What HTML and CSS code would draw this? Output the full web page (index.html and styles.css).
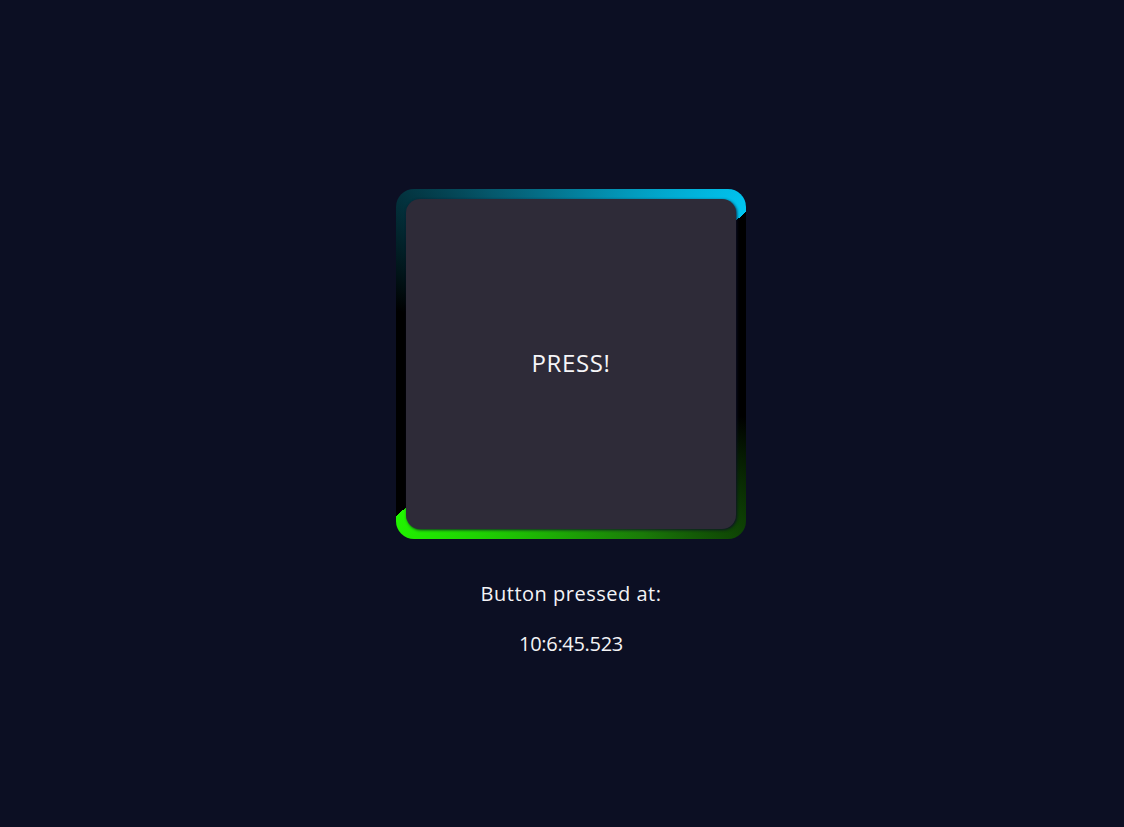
FILE: index.html
```html
<!DOCTYPE html>
<html lang="en">
<head>
<meta charset="utf-8">
<title>Press</title>
<link rel="stylesheet" href="styles.css">
</head>
<body>
<main class="page">
  <div class="frame">
    <button class="press-btn" type="button">PRESS!</button>
  </div>
  <p class="label">Button pressed at:</p>
  <p class="time">10:6:45.523</p>
</main>
</body>
</html>
```

FILE: styles.css
```css
html, body {
  margin: 0;
  padding: 0;
}

body {
  background: #0c0f23;
  min-height: 100vh;
  font-family: "Open Sans", "Liberation Sans", sans-serif;
  color: #f4f4f6;
}

.page {
  display: flex;
  flex-direction: column;
  align-items: center;
  padding-top: 189px;
  padding-left: 18px;
}

.frame {
  width: 350px;
  height: 350px;
  box-sizing: border-box;
  padding: 10px;
  border-radius: 18px;
  background: conic-gradient(from 49deg at 50% 50%,
    #000 0deg,
    #000 58deg,
    #1a7a08 108deg,
    #21f500 180deg,
    #000 180deg,
    #000 238deg,
    #05586c 286deg,
    #00c6f2 360deg);
}

.press-btn {
  width: 330px;
  height: 330px;
  border: none;
  border-radius: 14px;
  background: #2e2b38;
  box-shadow: 1px 1px 3px rgba(12, 14, 40, 0.9);
  color: #f6f6f8;
  font-family: "Open Sans", "Liberation Sans", sans-serif;
  font-size: 24px;
  letter-spacing: 0.6px;
  display: flex;
  align-items: center;
  justify-content: center;
  padding: 0 0 3px 0;
  cursor: pointer;
}

.label,
.time {
  margin: 0;
  font-size: 20px;
  line-height: 30px;
}

.label {
  margin-top: 40px;
  letter-spacing: 0.5px;
}

.time {
  margin-top: 20px;
  letter-spacing: -0.3px;
}
```
